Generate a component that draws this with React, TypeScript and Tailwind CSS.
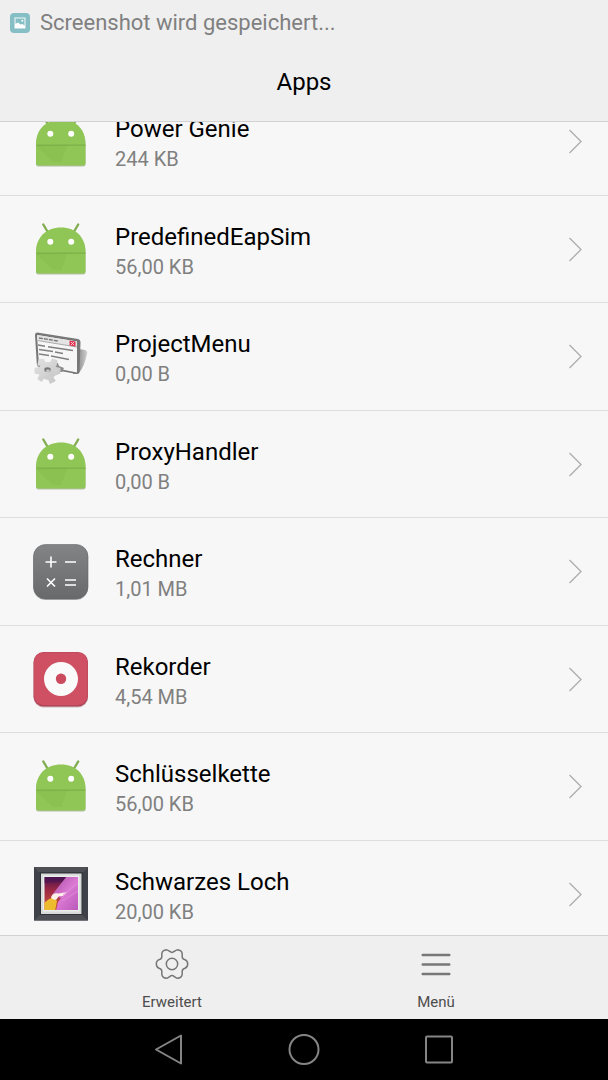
import React from 'react'

type IconName = 'android' | 'project' | 'calculator' | 'recorder' | 'gallery'

interface AppEntry {
  name: string
  size: string
  icon: IconName
}

const apps: AppEntry[] = [
  { name: 'Power Genie', size: '244 KB', icon: 'android' },
  { name: 'PredefinedEapSim', size: '56,00 KB', icon: 'android' },
  { name: 'ProjectMenu', size: '0,00 B', icon: 'project' },
  { name: 'ProxyHandler', size: '0,00 B', icon: 'android' },
  { name: 'Rechner', size: '1,01 MB', icon: 'calculator' },
  { name: 'Rekorder', size: '4,54 MB', icon: 'recorder' },
  { name: 'Schlüsselkette', size: '56,00 KB', icon: 'android' },
  { name: 'Schwarzes Loch', size: '20,00 KB', icon: 'gallery' },
]

function AndroidIcon() {
  return (
    <svg viewBox="0 0 60 60" className="size-[60px] shrink-0" aria-hidden="true">
      <path d="M12.3 5.5 17 13.5M47.2 5.5 42.5 13.5" stroke="#83ad52" strokeWidth="2.4" strokeLinecap="round" />
      <path d="M5 34C5 19 15 9.500 30 9.500S54.500 19 54.500 34V53Q54.500 55.500 52 55.500H7.500Q5 55.500 5 53Z" fill="#b5bfa8" />
      <path d="M5 33C5 18.500 15 8.500 30 8.500S54.500 18.500 54.500 33V52Q54.500 54.500 52 54.500H7.500Q5 54.500 5 52Z" fill="#8fc655" />
      <path d="M5 33.500H54.500V34.800L6 35.200Z" fill="#7fb24b" />
      <path d="M5.500 35H36L30 51H22Z" fill="#86bc4e" opacity=".5" />
      <circle cx="19.300" cy="22.800" r="3" fill="#fff" />
      <circle cx="40.200" cy="22.800" r="3" fill="#fff" />
    </svg>
  )
}

function ProjectIcon() {
  return (
    <svg viewBox="0 0 60 60" className="size-[60px] shrink-0" aria-hidden="true">
      <defs>
        <linearGradient id="project-shadow">
          <stop offset="0" stopColor="#6f6f6f" />
          <stop offset="1" stopColor="#cfcfcf" />
        </linearGradient>
        <linearGradient id="project-gear" x1="0" y1="0" x2="1" y2="1">
          <stop offset="0" stopColor="#e0e0e0" />
          <stop offset="1" stopColor="#c6c6c6" />
        </linearGradient>
      </defs>
      <path d="M48 23 54 24Q57 25 56 28C54 36 52 42 48 47L42 48Z" fill="url(#project-shadow)" />
      <path d="M6 6.500 47 13Q49.500 13.500 49.500 16L48.500 46Q48 48.500 45.500 48L8 41Q6 40.500 5.800 38L4 9Q4 6.500 6 6.500Z" fill="#777" />
      <path d="M6 9 46 15.500 46 46.500 8 39Z" fill="#f6f6f6" />
      <path d="M6 9 46 15.500V21L6.500 14.500Z" fill="#e4e4e4" />
      <path d="M6.500 14.500 46 21" stroke="#aaa" strokeWidth="1" />
      <path d="M8 12 27 15" stroke="#777" strokeWidth="1.400" strokeDasharray="4 1" />
      <path d="M38.500 14.500 44.500 15.500V20.500L38.500 19.500Z" fill="#e0324f" />
      <path d="M40 16 43 19M43 16 40 19" stroke="#ffd6dc" strokeWidth=".9" />
      <path d="M7 19 14 20.200M17 20.800 42 24.500M8 23.500 22 25.500M24 26 32 27.500M8 28 18 29.500M20 30 38 33.500" stroke="#808080" strokeWidth="1.500" />
      <path d="M22 33Q27 36 28 40L33 42 31 46 22 46Z" fill="#8a8a8a" />
      <g transform="translate(16.500 44.700)">
        <g fill="url(#project-gear)" stroke="url(#project-gear)" strokeWidth="2" strokeLinejoin="round">
          <circle r="8" />
          <path d="M-3-7-4-11H-8L-9-6ZM3-7 5-11 9-10 8-5ZM7-3 12-2 12 2 7 4ZM4 6 7 10 3 12 1 7ZM-4 6-6 10-9 8-7 4ZM-7-3-12-2-12 2-7 3Z" />
        </g>
        <ellipse cy="-1" rx="3.200" ry="2.400" fill="#777" />
        <ellipse cx=".4" cy="0" rx="2" ry="1.200" fill="#c9c9c9" />
      </g>
    </svg>
  )
}

function CalculatorIcon() {
  return (
    <svg viewBox="0 0 60 60" className="size-[60px] shrink-0" aria-hidden="true">
      <defs>
        <linearGradient id="calc-bg" x1="0" y1="0" x2="0" y2="1">
          <stop offset="0" stopColor="#828485" />
          <stop offset="1" stopColor="#68696a" />
        </linearGradient>
      </defs>
      <rect x="2.500" y="4.500" width="54.500" height="54.500" rx="12" fill="#b9b9b9" />
      <rect x="2.500" y="3.500" width="54.500" height="54.500" rx="12" fill="url(#calc-bg)" stroke="#656667" strokeWidth=".6" />
      <path
        d="M20 15.500V26.500M14.500 21H25.500M34 21H45M16 37.500 24 45.500M24 37.500 16 45.500M34 39H45M34 44H45"
        stroke="#fff"
        strokeWidth="1.600"
      />
    </svg>
  )
}

function RecorderIcon() {
  return (
    <svg viewBox="0 0 60 60" className="size-[60px] shrink-0" aria-hidden="true">
      <rect x="2.500" y="4.500" width="54.500" height="54" rx="10" fill="#c9b4b8" />
      <rect x="2.500" y="3" width="54.500" height="54.500" rx="10" fill="#b2445a" />
      <rect x="3" y="3.500" width="53.500" height="52.500" rx="9.500" fill="#cf5063" />
      <circle cx="30" cy="30" r="17" fill="#fafafa" />
      <circle cx="30" cy="29.700" r="5.200" fill="#cb4a5e" />
    </svg>
  )
}

function GalleryIcon() {
  return (
    <svg viewBox="0 0 60 60" className="size-[60px] shrink-0" aria-hidden="true">
      <defs>
        <linearGradient id="art-dark" x1="0" y1="0" x2="0" y2="1">
          <stop offset="0" stopColor="#4b1350" />
          <stop offset=".4" stopColor="#a02a44" />
          <stop offset="1" stopColor="#cf5a3c" />
        </linearGradient>
        <linearGradient id="art-pink" x1="0" y1="0" x2="1" y2="1">
          <stop offset="0" stopColor="#a84fa0" />
          <stop offset=".5" stopColor="#da78d3" />
          <stop offset="1" stopColor="#b857b8" />
        </linearGradient>
        <clipPath id="art-clip">
          <rect x="13.500" y="13" width="33.500" height="33" />
        </clipPath>
      </defs>
      <rect x="3" y="3" width="54" height="53.500" fill="#3f4148" />
      <path d="M3 3H57L53 8H7ZM3 56.500H57L51 51H9Z" fill="#4e5056" />
      <rect x="9" y="8.500" width="42.500" height="42.500" fill="#303238" />
      <rect x="10" y="9.500" width="40.500" height="40.500" fill="#d9dbda" />
      <rect x="12" y="11.500" width="36.500" height="36" fill="#eceeec" />
      <g clipPath="url(#art-clip)">
        <rect x="13" y="13" width="35" height="34" fill="url(#art-dark)" />
        <path d="M35 13H48V47H25L27 38 30 34 21 31Z" fill="url(#art-pink)" />
        <path d="M13 13H35L31 18 13 19Z" fill="#491452" opacity=".6" />
        <path d="M13 39Q20 33 23 34L26 37 24 47H13Z" fill="#ecbc2e" />
        <path d="M20 33Q22 28 28 29.500L36 28Q33 33 28 32L25 36 21 35Z" fill="#fff1ea" />
        <path d="M32 31 47 19M31 37 47 27" stroke="#e08edb" strokeWidth="1.400" opacity=".6" />
      </g>
    </svg>
  )
}

const icons: Record<IconName, () => React.JSX.Element> = {
  android: AndroidIcon,
  project: ProjectIcon,
  calculator: CalculatorIcon,
  recorder: RecorderIcon,
  gallery: GalleryIcon,
}

function AppRow({ app }: { app: AppEntry }) {
  const Icon = icons[app.icon]
  return (
    <li className="border-b border-[#dedede]">
      <button type="button" className="flex h-full w-full items-center gap-6 pr-[26px] pl-[31px] text-left">
        <Icon />
        <span className="min-w-0 flex-1 pt-[6px]">
          <span className="block truncate text-[24px] leading-[30px] text-black">{app.name}</span>
          <span className="block truncate text-[20px] leading-[30px] text-[#808080]">{app.size}</span>
        </span>
        <svg viewBox="0 0 14 26" className="h-[26px] w-[14px] shrink-0" fill="none" aria-hidden="true">
          <path d="M1.500 2 13 13.500 1.500 25" stroke="#adadad" strokeWidth="1.300" />
        </svg>
      </button>
    </li>
  )
}

export default function App() {
  return (
    <div className="flex h-screen flex-col overflow-hidden bg-[#f7f7f7] font-['Roboto',sans-serif]">
      <header className="shrink-0 border-b border-[#d2d2d2] bg-[#efefef]">
        <div className="flex h-[45px] items-center gap-[10px] pl-[10px]">
          <svg viewBox="0 0 20 20" className="size-5" aria-hidden="true">
            <rect width="20" height="20" rx="4" fill="#85bfc5" />
            <rect x="5" y="5" width="10" height="10" fill="none" stroke="#f4fafa" />
            <path d="M5 11 8 9.500 10.500 11.500 12.500 11 15 13V15H5Z" fill="#fff" />
            <circle cx="12.300" cy="7.800" r="1" fill="#fff" />
          </svg>
          <span className="text-[22px] leading-[30px] text-[#808080]">Screenshot wird gespeichert...</span>
        </div>
        <h1 className="h-[76px] pt-[22px] text-center text-[24px] leading-[30px] text-black">Apps</h1>
      </header>

      <main className="min-h-0 flex-1 overflow-hidden">
        {/* list is scrolled a bit past the top of the first visible row */}
        <ul className="-mt-[34px] grid h-[860px] grid-rows-8">
          {apps.map((app) => (
            <AppRow key={app.name} app={app} />
          ))}
        </ul>
      </main>

      <div className="grid h-[84px] shrink-0 grid-cols-2 border-t border-[#d2d2d2] bg-[#efefef] px-10 text-[15px] leading-5 text-[#4d4d4d]">
        <button type="button" className="flex flex-col items-center gap-[10px] pt-[10px]">
          <svg viewBox="-18 -18 36 36" className="size-9" fill="none" stroke="#777" strokeWidth="1.500" aria-hidden="true">
            <path d="M0-11.500C2-11.500 3.500-14.300 6-14.300Q10.200-13.500 10.200-10V-7.500Q10.200-5 12.500-4.500Q15.700-3.500 15.700 0Q15.700 3.500 12.500 4.500Q10.200 5 10.200 7.500V10Q10.200 13.500 6 14.300C3.500 14.300 2 11.500 0 11.500S-3.500 14.300-6 14.300Q-10.200 13.500-10.200 10V7.500Q-10.200 5-12.500 4.500Q-15.700 3.500-15.700 0Q-15.700-3.500-12.500-4.500Q-10.200-5-10.200-7.500V-10Q-10.200-13.500-6-14.300C-3.500-14.300-2-11.500 0-11.500Z" />
            <circle r="5.700" />
          </svg>
          Erweitert
        </button>
        <button type="button" className="flex flex-col items-center gap-[10px] pt-[10px]">
          <svg viewBox="-18 -18 36 36" className="size-9" fill="none" stroke="#777" strokeWidth="2.400" strokeLinecap="round" aria-hidden="true">
            <path d="M-13.300-9H13.300M-13.300 .5H13.300M-13.300 10H13.300" />
          </svg>
          Menü
        </button>
      </div>

      <nav className="grid h-[61px] shrink-0 grid-cols-3 bg-black px-[101px]">
        <button type="button" aria-label="Zurück" className="flex items-center justify-center">
          <svg viewBox="0 0 32 32" className="size-8" fill="none" stroke="#858585" strokeWidth="2" strokeLinejoin="round" aria-hidden="true">
            <path d="M28 1.500V29.500L3 15.500Z" />
          </svg>
        </button>
        <button type="button" aria-label="Startseite" className="flex items-center justify-center">
          <svg viewBox="0 0 32 32" className="size-8" fill="none" stroke="#858585" strokeWidth="2" aria-hidden="true">
            <circle cx="16" cy="15.500" r="14.500" />
          </svg>
        </button>
        <button type="button" aria-label="Letzte Apps" className="flex items-center justify-center">
          <svg viewBox="0 0 32 32" className="size-8" fill="none" stroke="#858585" strokeWidth="2" aria-hidden="true">
            <rect x="3" y="2.500" width="26" height="26" rx="1" />
          </svg>
        </button>
      </nav>
    </div>
  )
}
